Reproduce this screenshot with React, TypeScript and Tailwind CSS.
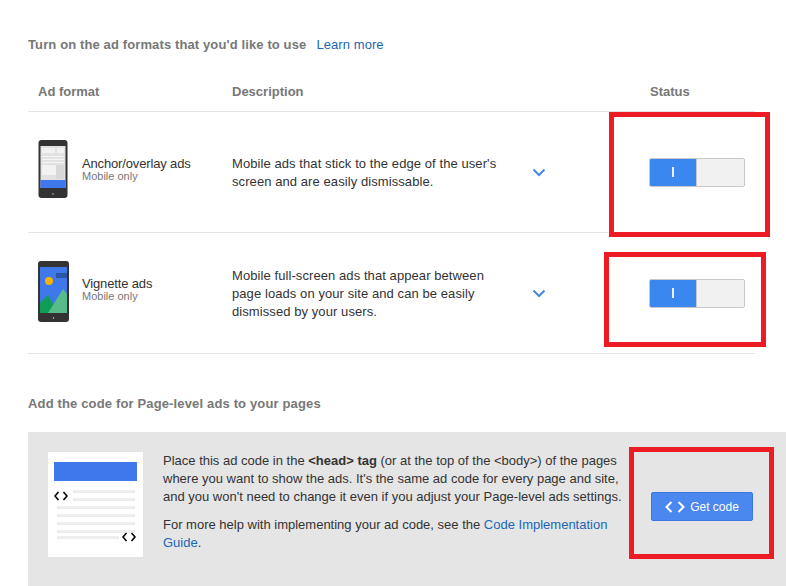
const PhoneAnchor = () => (
  <svg width="30" height="58" viewBox="0 0 30 58" className="block">
    <rect x="0.5" y="0" width="29" height="58" rx="3" fill="#333" />
    <rect x="2.5" y="6" width="25" height="42" fill="#e2e2e2" />
    <rect x="4" y="8" width="13" height="5" fill="#f2f2f2" />
    <rect x="19" y="8" width="7" height="5" fill="#f2f2f2" />
    <rect x="4" y="16" width="22" height="1" fill="#f5f5f5" />
    <rect x="4" y="19" width="22" height="1" fill="#f5f5f5" />
    <rect x="4" y="22" width="22" height="1" fill="#f5f5f5" />
    <rect x="4" y="25" width="14" height="10" fill="#f2f2f2" />
    <rect x="18" y="25" width="8" height="14" fill="#d8d8d8" />
    <rect x="2.5" y="40" width="25" height="8" fill="#3e78ea" />
    <circle cx="15" cy="54" r="0.7" fill="#ddd" />
  </svg>
)

const PhoneVignette = () => (
  <svg width="31" height="61" viewBox="0 0 31 61" className="block">
    <rect x="0" y="0" width="31" height="61" rx="3" fill="#333" />
    <rect x="2" y="6" width="27" height="46" fill="#3e78ea" />
    <rect x="18" y="12" width="11" height="5" fill="#2a56a8" />
    <circle cx="11" cy="20" r="4" fill="#f4b400" />
    <path d="M2 42 L10 34 L20 52 L2 52 Z" fill="#0f9d58" />
    <path d="M10 52 L25 28 L29 33 L29 52 Z" fill="#57bb8a" />
    <circle cx="15.5" cy="57" r="0.7" fill="#ddd" />
  </svg>
)

const Chevron = () => (
  <svg width="14" height="9" viewBox="0 0 14 9" className="shrink-0">
    <path d="M1.5 1.5 L7 7 L12.5 1.5" fill="none" stroke="#4a86e8" strokeWidth="2" />
  </svg>
)

const Toggle = () => (
  <div className="flex h-[29px] w-[96px] overflow-hidden rounded-[2px] border border-[#c8c8c8]">
    <div className="flex w-[46px] items-center justify-center bg-[#3b87f0]">
      <div className="h-[10px] w-[2px] bg-[#e8f0fe]" />
    </div>
    <div className="flex-1 border-l border-[#c8c8c8] bg-[#f1f1f1]" />
  </div>
)

const CodeMark = () => (
  <svg width="14" height="10" viewBox="0 0 14 10" className="block shrink-0">
    <path d="M4.5 1 L1 5 L4.5 9 M9.5 1 L13 5 L9.5 9" fill="none" stroke="#000" strokeWidth="1.6" />
  </svg>
)

const CodeArt = () => (
  <div className="flex h-[105px] w-[95px] shrink-0 flex-col bg-white px-[6px] pt-[10px]">
    <div className="h-[19px] w-[83px] bg-[#3e78ea]" />
    <div className="mt-[9px] flex items-center gap-[5px]">
      <CodeMark />
      <div className="flex flex-1 flex-col gap-[5px] pr-[2px]">
        <div className="h-[3px] bg-[#eeeef0]" />
        <div className="h-[3px] bg-[#eeeef0]" />
      </div>
    </div>
    <div className="mt-[5px] flex flex-col gap-[5px] pr-[2px] pl-[3px]">
      <div className="h-[3px] bg-[#eeeef0]" />
      <div className="h-[3px] bg-[#eeeef0]" />
      <div className="h-[3px] bg-[#eeeef0]" />
      <div className="h-[3px] bg-[#eeeef0]" />
    </div>
    <div className="mt-[-1px] flex items-center gap-[3px] pl-[3px]">
      <div className="h-[3px] w-[62px] bg-[#eeeef0]" />
      <CodeMark />
    </div>
  </div>
)

const RedBox = ({ className }: { className: string }) => (
  <div className={`pointer-events-none absolute border-[5px] border-[#ed1c24] ${className}`} />
)

const rows = [
  {
    name: "Anchor/overlay ads",
    icon: <PhoneAnchor />,
    iconClass: "mb-[7px]",
    textClass: "mb-[4px]",
    description: ["Mobile ads that stick to the edge of the user's", "screen and are easily dismissable."],
  },
  {
    name: "Vignette ads",
    icon: <PhoneVignette />,
    iconClass: "mb-[3px]",
    textClass: "mb-[6px]",
    description: [
      "Mobile full-screen ads that appear between",
      "page loads on your site and can be easily",
      "dismissed by your users.",
    ],
  },
]

export default function App() {
  return (
    <div className="relative h-[586px] w-[786px] overflow-hidden bg-white font-['Liberation_Sans',Arial,sans-serif] text-[13px] tracking-[0.08px] text-[#222]">
      <div className="pt-[37px] pl-[28px]">
        <p className="h-[15px] leading-[15px]">
          <span className="font-bold tracking-[0.12px] text-[#777]">Turn on the ad formats that you'd like to use</span>
          <a className="ml-[10px] text-[#1a66b5]">Learn more</a>
        </p>

        <div className="mt-[20px] w-[727px]">
          <div className="flex h-[40px] items-center border-b border-[#e5e5e5] pt-[1px] font-bold tracking-normal text-[#777]">
            <div className="w-[204px] pl-[10px]">Ad format</div>
            <div className="w-[418px]">Description</div>
            <div>Status</div>
          </div>

          {rows.map((row) => (
            <div key={row.name} className="flex h-[121px] items-center border-b border-[#e5e5e5]">
              <div className="flex w-[204px] items-center pl-[10px]">
                <div className={`w-[34px] shrink-0 ${row.iconClass}`}>{row.icon}</div>
                <div className={`ml-[10px] ${row.textClass}`}>
                  <div className="leading-[12px] tracking-[-0.15px] text-[#333]">{row.name}</div>
                  <div className="text-[11px] leading-[12px] tracking-normal text-[#777]">Mobile only</div>
                </div>
              </div>
              <div className="mt-[2px] w-[300px] leading-[18px] text-[#333]">
                {row.description.map((line) => (
                  <div key={line}>{line}</div>
                ))}
              </div>
              <Chevron />
              <div className="ml-[103px]">
                <Toggle />
              </div>
            </div>
          ))}
        </div>

        <p className="mt-[42px] h-[15px] leading-[15px] font-bold tracking-[0.15px] text-[#777]">Add the code for Page-level ads to your pages</p>

        <div className="mt-[21px] flex h-[154px] w-[758px] items-start bg-[#e5e5e5] pt-[20px] pl-[20px]">
          <CodeArt />
          <div className="ml-[20px] w-[470px] tracking-normal text-[#333]">
            <p className="leading-[18px]">
              Place this ad code in the <b>&lt;head&gt; tag</b> (or at the top of the &lt;body&gt;) of the pages
              <br />
              where you want to show the ads. It's the same ad code for every page and site,
              <br />
              and you won't need to change it even if you adjust your Page-level ads settings.
            </p>
            <p className="mt-[10px] leading-[18px]">
              For more help with implementing your ad code, see the <a className="text-[#1a66b5]">Code Implementation</a>
              <br />
              <a className="text-[#1a66b5]">Guide</a>.
            </p>
          </div>
          <button className="mt-[40px] ml-[18px] flex h-[29px] w-[102px] items-center justify-center gap-[5px] rounded-[2px] border border-[#3b78e7] bg-[#4a87ee] text-[12px] font-medium tracking-normal text-white">
            <svg width="20" height="12" viewBox="0 0 20 12">
              <path d="M6.5 1 L1.5 6 L6.5 11 M13.5 1 L18.5 6 L13.5 11" fill="none" stroke="#fff" strokeWidth="2" />
            </svg>
            Get code
          </button>
        </div>
      </div>

      <RedBox className="top-[112px] left-[609px] h-[125px] w-[161px]" />
      <RedBox className="top-[252px] left-[604px] h-[95px] w-[162px]" />
      <RedBox className="top-[447px] left-[629px] h-[112px] w-[145px]" />
    </div>
  )
}
